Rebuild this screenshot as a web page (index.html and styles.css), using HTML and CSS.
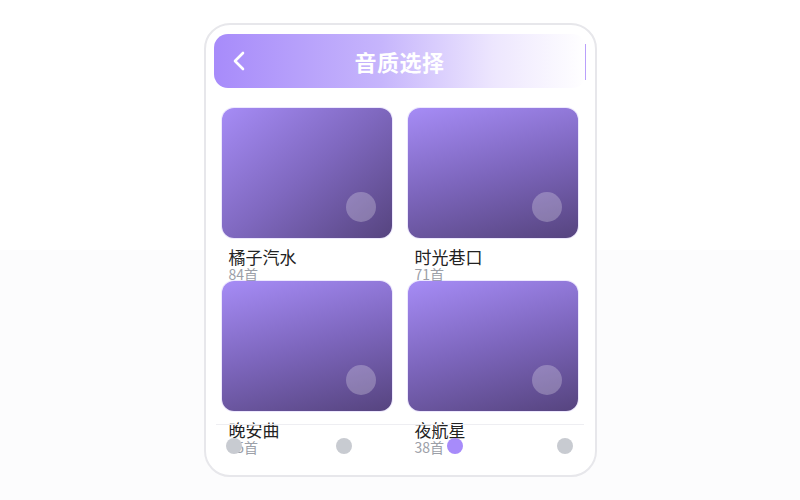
FILE: index.html
```html
<!DOCTYPE html>
<html lang="zh-CN">
<head>
    <meta charset="UTF-8">
    <meta name="viewport" content="width=device-width, initial-scale=1.0">
    <title>音质选择</title>
    <link rel="stylesheet" href="styles.css">
</head>
<body>
    <div class="phone">
        <header class="topbar">
            <span class="back">
                <svg width="14" height="20" viewBox="0 0 14 20">
                    <path d="M11 2 L3 10 L11 18" fill="none" stroke="#fff" stroke-width="2.6" stroke-linecap="round" stroke-linejoin="round"/>
                </svg>
            </span>
            <h1>音质选择</h1>
        </header>

        <main class="grid">
            <div class="album">
                <div class="cover cover-a"><span class="play"></span></div>
                <div class="name">橘子汽水</div>
                <div class="count">84首</div>
            </div>
            <div class="album">
                <div class="cover"><span class="play"></span></div>
                <div class="name">时光巷口</div>
                <div class="count">71首</div>
            </div>
            <div class="album">
                <div class="cover"><span class="play"></span></div>
                <div class="name">晚安曲</div>
                <div class="count">65首</div>
            </div>
            <div class="album">
                <div class="cover"><span class="play"></span></div>
                <div class="name">夜航星</div>
                <div class="count">38首</div>
            </div>
        </main>

        <!-- bottom tabs float over the list -->
        <nav class="tabbar">
            <span class="dot"></span>
            <span class="dot"></span>
            <span class="dot active"></span>
            <span class="dot"></span>
        </nav>
    </div>
</body>
</html>
```

FILE: styles.css
```css
html, body {
    margin: 0;
    height: 100%;
}
body {
    font-family: "Noto Sans CJK SC", "Noto Sans", sans-serif;
    background: linear-gradient(#ffffff 50%, #fcfcfd 50%);
    padding-top: 23px;
    box-sizing: border-box;
}
.phone {
    position: relative;
    box-sizing: border-box;
    width: 393px;
    height: 454px;
    margin: 0 auto;
    padding: 9px 9px 0 8px;
    background: #fff;
    border: 2px solid #e7e7eb;
    border-radius: 26px;
    overflow: hidden;
}
.topbar {
    position: relative;
    height: 54px;
    display: flex;
    align-items: center;
    justify-content: center;
    border-radius: 14px;
    background: linear-gradient(90deg, #a78bfa 0%, #c6b5fc 45%, #ede6fe 75%, #ffffff 100%);
}
.topbar::after {
    content: "";
    position: absolute;
    right: 0;
    top: 10px;
    bottom: 8px;
    width: 1px;
    background: #b9a0fb;
}
.back {
    position: absolute;
    left: 18px;
    top: 17px;
    display: flex;
}
.topbar h1 {
    margin: 0;
    color: #fff;
    font-size: 22px;
    font-weight: 700;
    letter-spacing: 0.5px;
}
.grid {
    display: grid;
    grid-template-columns: 170px 170px;
    column-gap: 16px;
    margin: 20px 8px 0;
}
.album {
    height: 173px;
}
.cover {
    position: relative;
    height: 130px;
    border-radius: 12px;
    background: linear-gradient(165deg, #a68cf6 0%, #7d66bd 50%, #56447f 100%);
    box-shadow: 0 0 0 1px rgba(167, 139, 250, 0.2);
}
.cover-a {
    background: linear-gradient(140deg, #a68cf6 0%, #7f68bf 50%, #56447f 100%);
}
.play {
    position: absolute;
    right: 16px;
    bottom: 16px;
    width: 30px;
    height: 30px;
    border-radius: 50%;
    background: rgba(255, 255, 255, 0.25);
}
.name {
    margin: 9px 0 0 7px;
    font-size: 17px;
    line-height: 20px;
    color: #222;
}
.count {
    margin-left: 7px;
    font-size: 14px;
    line-height: 14px;
    color: #9ca0a8;
}
.tabbar {
    position: absolute;
    left: 10px;
    right: 11px;
    bottom: 0;
    display: flex;
    justify-content: space-between;
    padding: 13px 10px 21px;
    border-top: 1px solid #eeeef2;
}
.dot {
    width: 16px;
    height: 16px;
    border-radius: 50%;
    background: #c8cbd1;
}
.dot.active {
    background: #a78bfa;
}
```
